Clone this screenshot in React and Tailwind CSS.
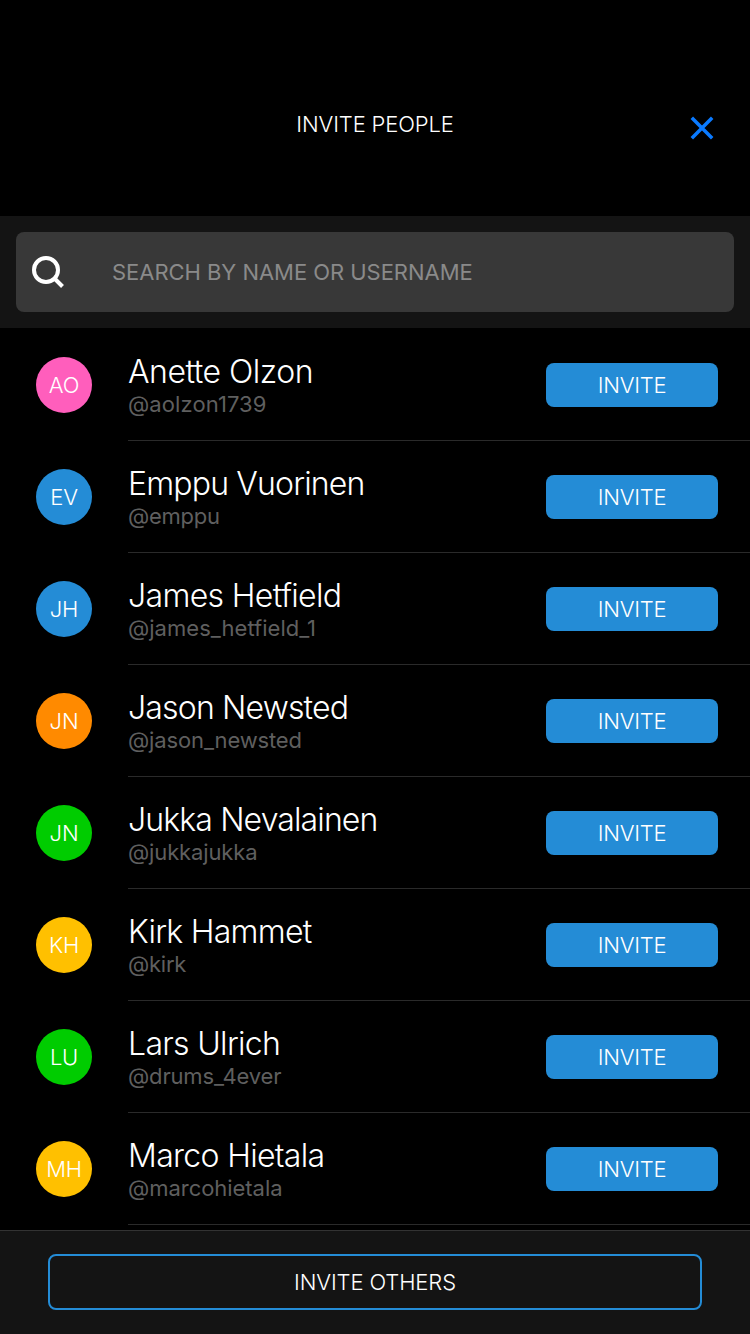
const people = [
  { id: 1, i: "AO", n: "Anette Olzon", u: "@aolzon1739", bg: "bg-[#ff5ebc]", nt: "tracking-[-0.5px]", ut: "tracking-[0.09px]" },
  { id: 2, i: "EV", n: "Emppu Vuorinen", u: "@emppu", bg: "bg-[#248cd6]", nt: "tracking-[-0.83px]", ut: "tracking-[-0.25px]" },
  { id: 3, i: "JH", n: "James Hetfield", u: "@james_hetfield_1", bg: "bg-[#248cd6]", nt: "tracking-[-0.65px]", ut: "tracking-[0.02px]" },
  { id: 4, i: "JN", n: "Jason Newsted", u: "@jason_newsted", bg: "bg-[#ff8a00]", nt: "tracking-[-0.83px]", ut: "tracking-[-0.14px]" },
  { id: 5, i: "JN", n: "Jukka Nevalainen", u: "@jukkajukka", bg: "bg-[#00cc00]", nt: "tracking-[-0.87px]", ut: "tracking-[-0.14px]" },
  { id: 6, i: "KH", n: "Kirk Hammet", u: "@kirk", bg: "bg-[#ffc000]", nt: "tracking-[-0.73px]", ut: "tracking-[-0.25px]" },
  { id: 7, i: "LU", n: "Lars Ulrich", u: "@drums_4ever", bg: "bg-[#00cc00]", nt: "tracking-[-0.68px]", ut: "tracking-[-0.16px]" },
  { id: 8, i: "MH", n: "Marco Hietala", u: "@marcohietala", bg: "bg-[#ffc000]", nt: "tracking-[-0.68px]", ut: "tracking-[-0.04px]" },
];

function Row({ p }) {
  return (
    <li className="flex h-28 items-start pl-9">
      <div className={`mt-[29px] flex size-14 shrink-0 items-center justify-center rounded-full text-[22px] font-light tracking-[-0.2px] ${p.bg}`}>{p.i}</div>
      <div className="ml-9 flex h-[113px] flex-1 items-start border-b border-[#2a2a2a] pr-8">
        <div className="flex-1 pt-[25px]">
          <div className={`text-[32px] leading-[37px] font-light whitespace-nowrap ${p.nt}`}>{p.n}</div>
          <div className={`text-[22px] leading-7 text-[#5f5f5f] ${p.ut}`}>{p.u}</div>
        </div>
        <button className="mt-[35px] h-11 w-[172px] rounded-lg bg-[#248cd6] text-[22px] font-light tracking-[-0.25px]">INVITE</button>
      </div>
    </li>
  );
}

export default function App() {
  return (
    <div className="flex h-[1334px] w-[750px] flex-col overflow-hidden bg-black font-['Inter',sans-serif] text-white">
      <header className="grid h-[216px] grid-cols-[1fr_auto_1fr] pt-[110px]">
        <h1 className="col-start-2 text-[22px] leading-7 font-light tracking-[-0.15px]">INVITE PEOPLE</h1>
        <button aria-label="Close" className="mt-1.5 mr-9 h-6 justify-self-end">
          <svg className="size-6" viewBox="0 0 24 24" fill="none" stroke="#0a7aff" strokeWidth="3.5"><path d="M1.8 1.8 22.2 22.2M22.2 1.8 1.8 22.2" /></svg>
        </button>
      </header>
      <div className="h-28 bg-[#141414] p-4">
        <div className="flex h-20 items-center rounded-lg bg-[#383838] pl-4">
          <svg className="size-8" viewBox="0 0 32 32" fill="none" stroke="#fff" strokeWidth="4"><circle cx="14" cy="14" r="12" /><path d="m22 22 8.5 8.5" /></svg>
          <span className="ml-12 text-[22px] tracking-[-0.04px] text-[#8a8a8a]">SEARCH BY NAME OR USERNAME</span>
        </div>
      </div>
      <ul className="h-[902px] shrink-0 overflow-hidden">
        {people.map((p) => <Row key={p.id} p={p} />)}
      </ul>
      <footer className="h-[104px] border-t border-[#333] bg-[#141414] px-12 pt-[23px]">
        <button className="h-14 w-full rounded-lg border-2 border-[#248cd6] text-[22px] font-light tracking-[-0.12px]">INVITE OTHERS</button>
      </footer>
    </div>
  );
}
